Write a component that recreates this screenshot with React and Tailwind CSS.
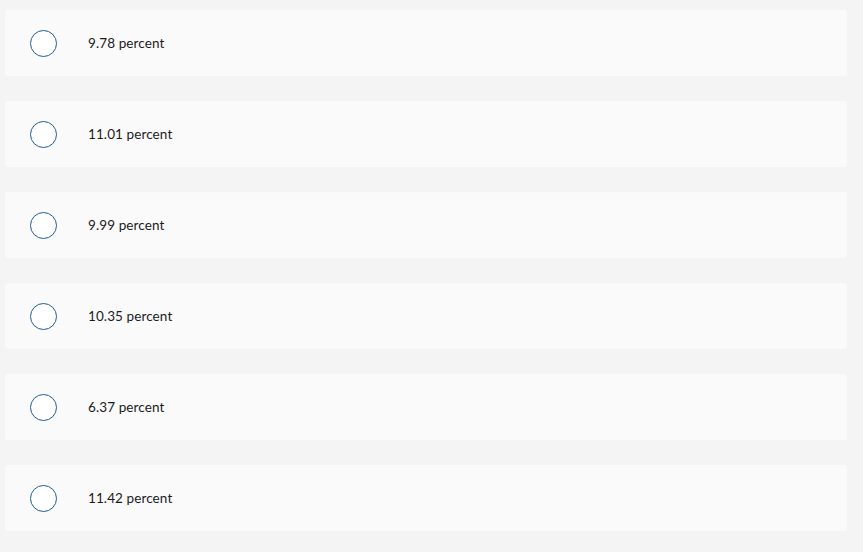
const options = ["9.78 percent", "11.01 percent", "9.99 percent", "10.35 percent", "6.37 percent", "11.42 percent"];

export default function App() {
  return (
    <div className="min-h-[552px] w-full bg-[#f4f4f4] pt-[10px] pl-[5px] pr-[16px] pb-[21px] font-['Lato',sans-serif]">
      <div className="flex flex-col gap-[25px]">
        {options.map((opt) => (
          <label
            key={opt}
            className="flex h-[66px] items-center rounded-[3px] bg-[#fafafa] pl-[25px] cursor-pointer"
          >
            <span className="h-[27px] w-[27px] shrink-0 rounded-full border-[1.5px] border-[#1f5c99] bg-white" />
            <span className="ml-[31px] mt-[1px] text-[13.5px] tracking-[0.1px] text-[#1a1a1a]">{opt}</span>
          </label>
        ))}
      </div>
    </div>
  );
}
